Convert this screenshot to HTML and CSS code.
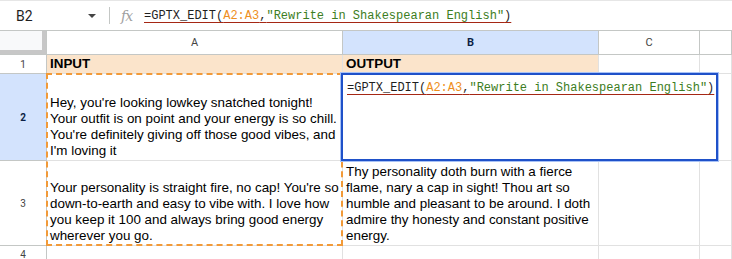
FILE: index.html
```html
<!DOCTYPE html>
<html lang="en">

<head>
    <meta charset="UTF-8">
    <title>GPTX_EDIT</title>
    <link rel="stylesheet" href="styles.css">
</head>

<body>
    <div class="formula-bar">
        <div class="name-box">B2</div>
        <span class="name-arrow"></span>
        <span class="bar-sep"></span>
        <span class="fx">fx</span>
        <div class="formula">=GPTX_EDIT(<span class="ref">A2:A3</span>,<span class="str">"Rewrite in Shakespearan English"</span>)</div>
    </div>

    <div class="sheet">
        <div class="corner"></div>
        <div class="col-head">A</div>
        <div class="col-head selected">B</div>
        <div class="col-head">C</div>
        <div class="col-head"></div>

        <div class="row-head">1</div>
        <div class="cell title">INPUT</div>
        <div class="cell title">OUTPUT</div>
        <div class="cell"></div>
        <div class="cell"></div>

        <div class="row-head selected">2</div>
        <div class="cell">Hey, you're looking lowkey snatched tonight! Your outfit is on point and your energy is so chill. You're definitely giving off those good vibes, and I'm loving it</div>
        <div class="cell"></div>
        <div class="cell"></div>
        <div class="cell"></div>

        <div class="row-head">3</div>
        <div class="cell">Your personality is straight fire, no cap! You're so down-to-earth and easy to vibe with. I love how you keep it 100 and always bring good energy wherever you go.</div>
        <div class="cell">Thy personality doth burn with a fierce flame, nary a cap in sight! Thou art so humble and pleasant to be around. I doth admire thy honesty and constant positive energy.</div>
        <div class="cell"></div>
        <div class="cell"></div>

        <div class="row-head last">4</div>
        <div class="cell"></div>
        <div class="cell"></div>
        <div class="cell"></div>
        <div class="cell"></div>

        <!-- overlays: copied range and open cell editor -->
        <div class="copy-range"></div>
        <div class="editor">
            <span class="formula">=GPTX_EDIT(<span class="ref">A2:A3</span>,<span class="str">"Rewrite in Shakespearan English"</span>)</span>
        </div>
    </div>
</body>

</html>
```

FILE: styles.css
```css
body {
    margin: 0;
    font-family: "Liberation Sans", Arial, sans-serif;
    background: #fff;
    color: #000;
    overflow: hidden;
}

.formula-bar {
    display: flex;
    align-items: center;
    height: 31px;
    box-sizing: border-box;
    border-top: 1px solid #e6e6e6;
    border-bottom: 1px solid #c4c7c5;
}

.name-box {
    width: 72px;
    padding-left: 16px;
    font-family: Roboto, "Liberation Sans", sans-serif;
    font-size: 14px;
    color: #1f1f1f;
}

.name-arrow {
    width: 0;
    height: 0;
    border-left: 4px solid transparent;
    border-right: 4px solid transparent;
    border-top: 4px solid #444;
}

.bar-sep {
    width: 1px;
    height: 17px;
    margin-left: 13px;
    background: #c4c7c5;
}

.fx {
    margin-left: 11px;
    width: 23px;
    font-family: "DejaVu Serif", serif;
    font-style: italic;
    font-size: 14px;
    color: #a0a0a0;
    letter-spacing: -1px;
}

.formula {
    font-family: "Liberation Mono", monospace;
    font-size: 12px;
    color: #1f1f1f;
    white-space: nowrap;
    text-decoration: underline;
    text-decoration-color: #a52714;
    text-underline-offset: 3px;
}

.ref {
    color: #ee8f1e;
}

.str {
    color: #3c7d22;
}

.sheet {
    position: relative;
    display: grid;
    grid-template-columns: 47px 296px 256px 101px 1fr;
    grid-template-rows: 24px 19px 87px 85px 20px;
}

.sheet > div {
    box-sizing: border-box;
    border-right: 1px solid #e1e1e1;
    border-bottom: 1px solid #e1e1e1;
}

.corner {
    background: #f8f9fa;
    box-shadow: inset -4px -4px 0 #c7c7c7;
}

.sheet > .corner,
.sheet > .col-head,
.sheet > .row-head {
    border-color: #c4c7c5;
}

.col-head {
    display: flex;
    align-items: center;
    justify-content: center;
    font-family: Roboto, "Liberation Sans", sans-serif;
    font-size: 11px;
    color: #444;
}

.row-head {
    display: flex;
    align-items: center;
    justify-content: center;
    font-family: Roboto, "Liberation Sans", sans-serif;
    font-size: 10px;
    color: #444;
}

.row-head.last {
    align-items: flex-start;
    padding-top: 3px;
}

.selected {
    background: #d3e3fd;
    color: #0b1f45;
    font-weight: bold;
}

.cell {
    display: flex;
    align-items: flex-end;
    padding: 0 1px 1px 3px;
    font-size: 13.4px;
    line-height: 16px;
}

.title {
    background: #fbe4cb;
    font-weight: bold;
    align-items: center;
    padding-bottom: 0;
}

.sheet > .copy-range {
    position: absolute;
    left: 46px;
    top: 42px;
    width: 297px;
    height: 173px;
    border: 2px dashed #f29a38;
}

.sheet > .editor {
    position: absolute;
    left: 341px;
    top: 42px;
    width: 377px;
    height: 88px;
    padding: 2px 4px;
    background: #fff;
    border: 2px solid #1f51c9;
    box-shadow: 0 0 0 1px #a8c2f6;
}
```
